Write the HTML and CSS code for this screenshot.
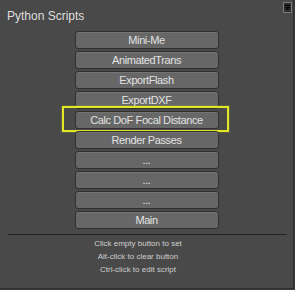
FILE: index.html
```
<!DOCTYPE html>
<html lang="en">
<head>
    <meta charset="UTF-8">
    <meta name="viewport" content="width=device-width, initial-scale=1.0">
    <title>Python Scripts</title>
    <link rel="stylesheet" href="styles.css">
</head>
<body>
    <div class="panel">
        <div class="menu-toggle">
            <svg width="9" height="11" viewBox="0 0 9 11">
                <rect x="0.5" y="0.5" width="8" height="10" fill="#2c2c2c" stroke="#7a7a7a"/>
                <rect x="2" y="3" width="5" height="1" fill="#000"/>
                <path d="M2 5 H7 L4.5 8 Z" fill="#000"/>
            </svg>
        </div>

        <h1 class="title">Python Scripts</h1>

        <div class="script-list">
            <button class="script-btn">Mini-Me</button>
            <button class="script-btn">AnimatedTrans</button>
            <button class="script-btn">ExportFlash</button>
            <button class="script-btn">ExportDXF</button>
            <button class="script-btn highlighted">Calc DoF Focal Distance</button>
            <button class="script-btn">Render Passes</button>
            <button class="script-btn">...</button>
            <button class="script-btn">...</button>
            <button class="script-btn">...</button>
            <button class="script-btn">Main</button>
        </div>

        <hr class="divider">

        <div class="help">
            <p>Click empty button to set</p>
            <p>Alt-click to clear button</p>
            <p>Ctrl-click to edit script</p>
        </div>
    </div>
</body>
</html>
```

FILE: styles.css
```
/* Panel */
body {
    margin: 0;
    background: #3a3a3a;
    font-family: 'Liberation Sans', Arial, sans-serif;
}

.panel {
    position: relative;
    width: 293px;
    height: 288px;
    background: #494949;
    border-right: 1px solid #2e2e2e;
    border-bottom: 1px solid #2e2e2e;
}

.menu-toggle {
    position: absolute;
    top: 2px;
    right: 1px;
    line-height: 0;
}

.title {
    margin: 0;
    padding: 9px 0 0 7px;
    font-size: 12px;
    line-height: 15px;
    font-weight: normal;
    color: #dedede;
}

/* Buttons */
.script-list {
    display: flex;
    flex-direction: column;
    align-items: center;
    gap: 2px;
    margin-top: 7px;
}

.script-btn {
    position: relative;
    width: 144px;
    height: 18px;
    padding: 0;
    background: #676767;
    border: 1px solid #303030;
    border-radius: 3px;
    box-shadow: inset 0 1px 0 #747474;
    color: #e2e2e2;
    font-family: 'Liberation Sans', Arial, sans-serif;
    font-size: 11px;
    letter-spacing: -0.4px;
    line-height: 16px;
}

.highlighted::after {
    content: "";
    position: absolute;
    top: -6px;
    bottom: -4px;
    left: -14px;
    right: -11px;
    border: 2px solid #e2e628;
    box-shadow: 0 0 1px #c8cc20;
}

/* Help */
.divider {
    margin: 5px 6px 0 8px;
    border: none;
    border-top: 1px solid #232323;
    height: 0;
}

.help {
    margin-top: 2px;
    padding-right: 17px;
    text-align: center;
    color: #cfcfcf;
    font-size: 8px;
    line-height: 13px;
}

.help p {
    margin: 0;
}
```
